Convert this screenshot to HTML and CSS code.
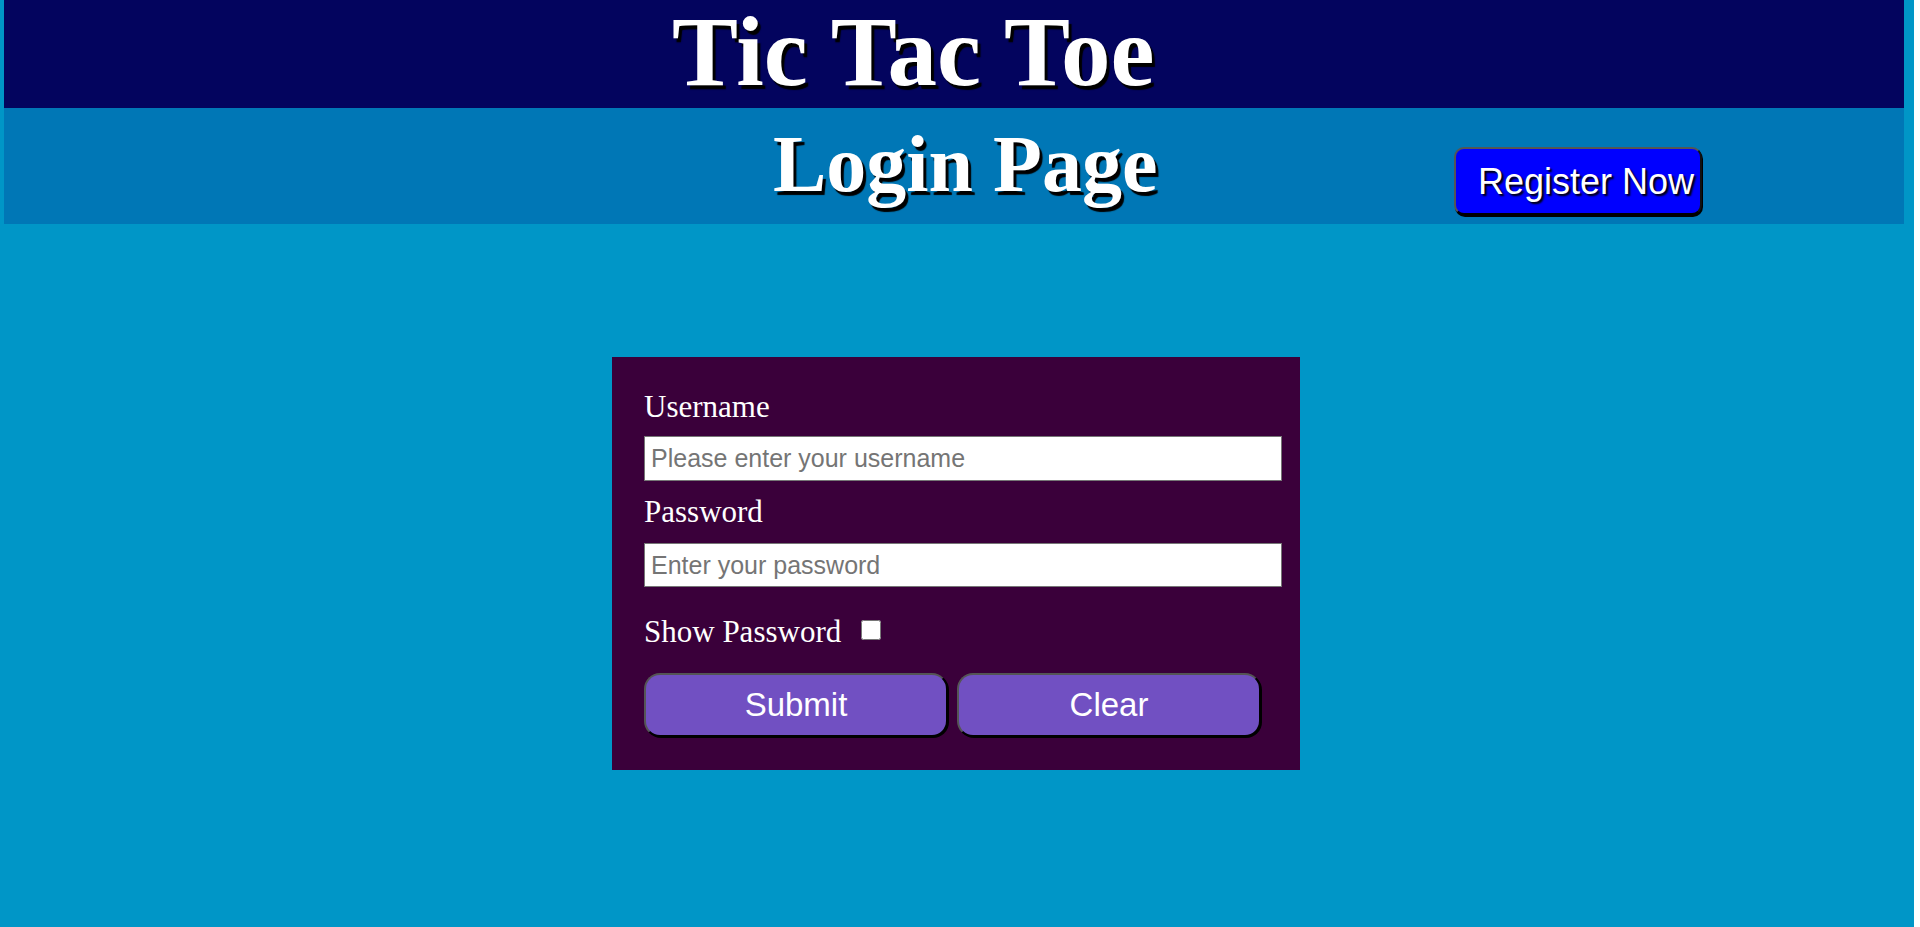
FILE: index.html
```html
<!DOCTYPE html>
<html lang="en">
<head>
<meta charset="utf-8">
<title>Tic Tac Toe - Login</title>
<link rel="stylesheet" href="styles.css">
</head>
<body>
<div class="page">
  <header class="title-bar">
    <h1 class="title">Tic Tac Toe</h1>
  </header>
  <div class="sub-bar">
    <h2 class="subtitle">Login Page</h2>
    <button class="register" type="button">Register Now</button>
  </div>
  <form class="card">
    <label class="field-label" for="username">Username</label>
    <input class="field" id="username" type="text" placeholder="Please enter your username">
    <label class="field-label pw-label" for="password">Password</label>
    <input class="field pw-field" id="password" type="password" placeholder="Enter your password">
    <div class="show-row">
      <span class="show-text">Show Password</span>
      <input class="show-box" type="checkbox">
    </div>
    <div class="actions">
      <button class="action" type="button">Submit</button>
      <button class="action" type="reset">Clear</button>
    </div>
  </form>
</div>
</body>
</html>
```

FILE: styles.css
```css
html {
  background: #ffffff;
}
body {
  margin: 0;
  font-family: "Liberation Serif", "Times New Roman", serif;
}
.page {
  width: 1914px;
  min-height: 927px;
  box-sizing: border-box;
  padding: 0 10px 0 4px;
  background: #0096c7;
  overflow: hidden;
}
.title-bar {
  height: 108px;
  background: #03045e;
  padding-left: 668px;
}
.title {
  margin: 0;
  font-size: 99px;
  line-height: 104px;
  font-weight: bold;
  color: #ffffff;
  text-shadow: 3px 4px 1px #000000;
}
.sub-bar {
  height: 116px;
  background: #0077b6;
  display: flex;
  align-items: flex-start;
  padding-left: 769px;
}
.subtitle {
  margin: 0;
  font-size: 80px;
  line-height: 112px;
  font-weight: bold;
  color: #ffffff;
  text-shadow: 3px 4px 1px #000000;
}
.register {
  margin: 39px 202px 0 auto;
  width: 248px;
  height: 68px;
  box-sizing: border-box;
  padding: 2px 4px 0 22px;
  background: #0000ff;
  color: #ffffff;
  font-family: "Liberation Sans", Arial, sans-serif;
  font-size: 36px;
  text-align: left;
  border: 2px solid #555555;
  border-bottom-color: #000000;
  border-right-color: #111111;
  border-radius: 10px;
  box-shadow: 1px 2px 0 #000000;
  text-shadow: 2px 2px 2px #000000;
  white-space: nowrap;
}
.card {
  width: 688px;
  height: 413px;
  box-sizing: border-box;
  margin: 133px 0 0 608px;
  padding: 31px 19px 0 32px;
  background: #3a003a;
  display: flex;
  flex-direction: column;
  align-items: flex-start;
}
.field-label {
  color: #ffffff;
  font-size: 31px;
  line-height: 37px;
}
.field {
  margin: 11px 0 0;
  width: 638px;
  height: 45px;
  box-sizing: border-box;
  padding: 0 6px;
  border: 1px solid #767676;
  background: #ffffff;
  font-family: "Liberation Sans", Arial, sans-serif;
  font-size: 25px;
  color: #000000;
}
.field::placeholder {
  color: #757575;
}
.pw-label {
  margin-top: 12px;
}
.pw-field {
  margin-top: 13px;
  height: 44px;
}
.show-row {
  margin-top: 26px;
  display: flex;
  align-items: center;
  height: 37px;
}
.show-text {
  color: #ffffff;
  font-size: 31px;
  line-height: 37px;
}
.show-box {
  margin: 0 0 4px 20px;
  width: 20px;
  height: 20px;
}
.actions {
  margin-top: 23px;
  display: flex;
  gap: 9px;
}
.action {
  width: 304px;
  height: 64px;
  box-sizing: border-box;
  background: #7150c2;
  color: #ffffff;
  font-family: "Liberation Sans", Arial, sans-serif;
  font-size: 33px;
  border: 2px solid #555555;
  border-bottom-color: #000000;
  border-right-color: #000000;
  border-radius: 16px;
  box-shadow: 1px 1px 0 #000000;
}
```
